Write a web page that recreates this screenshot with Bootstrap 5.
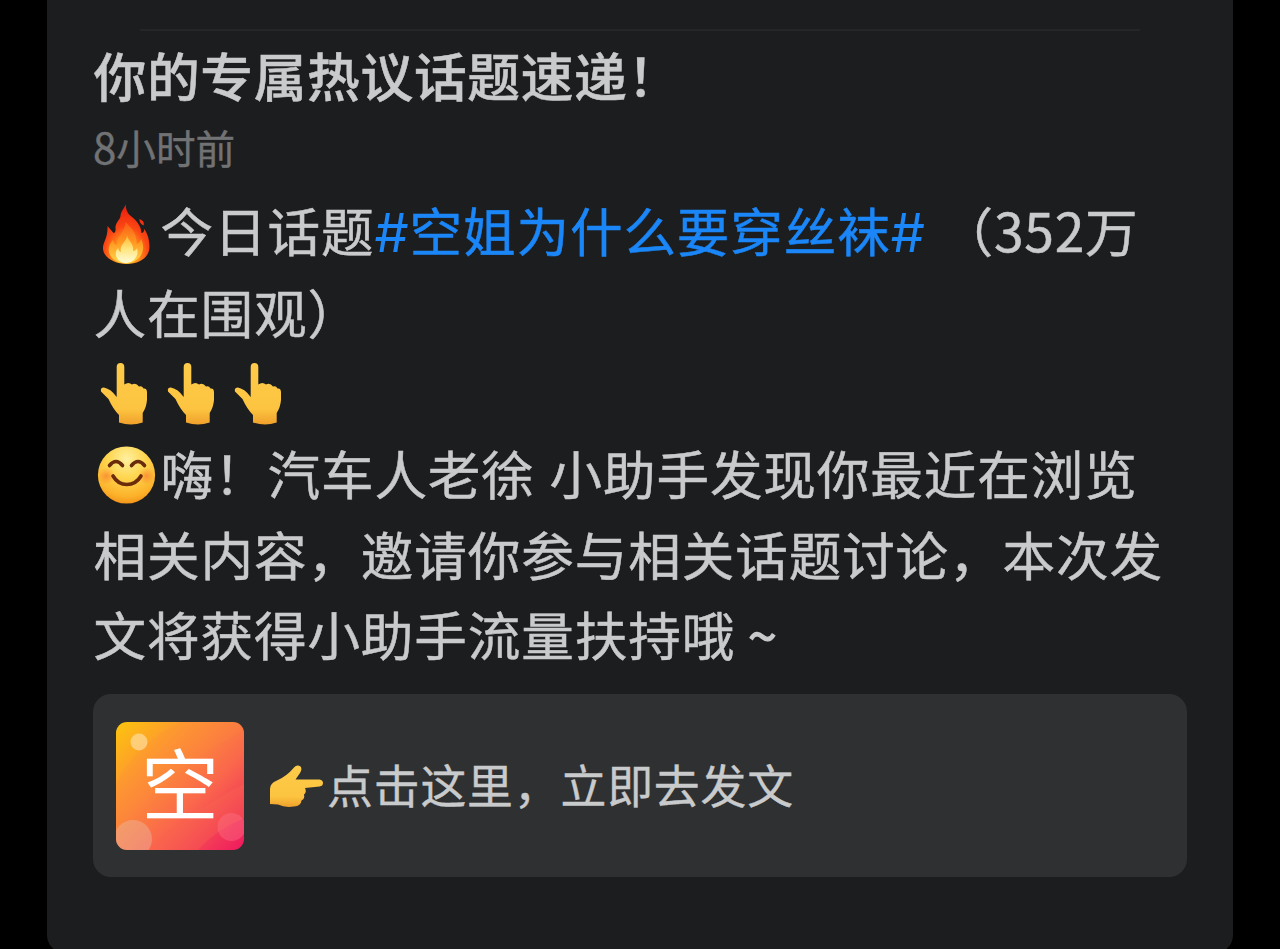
<!DOCTYPE html>
<html lang="zh-CN">
<head>
  <meta charset="UTF-8">
  <title>热议话题速递</title>
  <meta name="viewport" content="width=device-width, initial-scale=1">
  <link href="https://cdn.jsdelivr.net/npm/bootstrap@5.3.2/dist/css/bootstrap.min.css" rel="stylesheet">
  <style>
    body {
      background: #000;
      color: #c9cacc;
      font-family: "Noto Sans CJK SC", sans-serif;
    }
    .tela { height: 949px; }
    .painel {
      height: 953px;
      margin: 0 47px;
      padding: 29px 46px 0;
      background: #1c1d1f;
      border-radius: 0 0 18px 18px;
    }
    .divisor { height: 2px; margin: 0 47px; background: #252628; }
    .titulo {
      font-size: 52.8px;
      letter-spacing: .6px;
      line-height: 80px;
      font-weight: 500;
      margin-top: 3px;
      padding-left: .5px;
      -webkit-text-stroke: .5px currentColor;
    }
    .hora {
      font-size: 39.6px;
      line-height: 60px;
      color: #717274;
      margin-top: 2px;
      -webkit-text-stroke: .4px currentColor;
    }
    .hora span { font-size: 42px; }
    .mensagem {
      font-size: 52.6px;
      letter-spacing: .88px;
      word-spacing: 2px;
      line-height: 80.4px;
      margin-top: 14px;
      -webkit-text-stroke: .5px currentColor;
    }
    .linha { height: 80.4px; padding-left: .5px; }
    .linha-emoji { padding-left: 0; }
    .topico { color: #1a86f7; }
    .hash { font-family: Inter, sans-serif; font-size: 54px; -webkit-text-stroke: 0; }
    .num { font-size: 53.4px; letter-spacing: .7px; }
    .til { margin-left: -2px; -webkit-text-stroke: 1.2px currentColor; }
    .emoji { width: 67.5px; height: 80px; flex: none; margin-top: 3px; }
    .mao-cima { width: 66.8px; }
    .acao {
      height: 183px;
      margin-top: 21px;
      padding-left: 23px;
      background: #2f3031;
      border-radius: 18px;
      font-size: 45.9px;
      letter-spacing: .8px;
    }
    .mao { width: 66px; height: 58px; margin: -2px 0 0 19px; }
    .acao-texto {
      margin: -5px 0 0 -2px;
      -webkit-text-stroke: .4px currentColor;
    }
  </style>
</head>
<body>

  <div class="tela overflow-hidden">
    <div class="painel">
      <div class="divisor"></div>
      <div class="titulo text-nowrap">你的专属热议话题速递！</div>
      <div class="hora text-nowrap"><span>8</span>小时前</div>

      <div class="mensagem text-nowrap">
        <div class="linha linha-emoji d-flex align-items-center">
          <svg class="emoji" viewBox="0 0 67.5 80">
            <defs>
              <radialGradient id="fogo" cx=".5" cy=".85" r=".8">
                <stop offset="0" stop-color="#ffc02c"/>
                <stop offset=".35" stop-color="#ff8a1a"/>
                <stop offset=".6" stop-color="#fb4714"/>
                <stop offset="1" stop-color="#e8200e"/>
              </radialGradient>
              <linearGradient id="chama" x1="0" y1="0" x2="0" y2="1">
                <stop offset="0" stop-color="#fb5a16"/>
                <stop offset=".5" stop-color="#ff9a22"/>
                <stop offset="1" stop-color="#ffd84a"/>
              </linearGradient>
              <linearGradient id="miolo" x1="0" y1="0" x2="0" y2="1">
                <stop offset="0" stop-color="#ffb52c"/>
                <stop offset=".5" stop-color="#ffe680"/>
                <stop offset="1" stop-color="#fffbd8"/>
              </linearGradient>
            </defs>
            <path fill="url(#fogo)" d="M32.700 11.500C33 18 35 21 39 24C44 28 48 33 48.500 40Q51 40 51.300 36C55 41 57 49 56.300 56C55 65 46 71 33.700 71C22 71 11 65 10 56C9.500 49 15 46 14.500 33Q18 37 20.500 40Q23 40 22.500 35C22 30 27 27 27.500 23C28 18 31 16 32.700 11.500ZM46.500 26Q52 28 50.500 32.500Q46 30 46.500 26Z"/>
            <path fill="url(#chama)" d="M32.500 29C37 34 44 39 43.500 51Q47 50 48 46C52 54 50 60 46 65Q40 70.500 33 70.500Q24 70 19 65C14 59 15 52 20 47Q21 52 24 52C24 43 32 39 32.500 29Z"/>
            <path fill="url(#miolo)" d="M34 42C35 48 41 50 40 58Q43 58 44 55Q46 62 41 67Q37 70.500 32 70Q25 69 23 63Q22 58 25 55Q26 59 28 59C26 51 34 49 34 42Z"/>
          </svg>
          <span>今日话题<span class="topico"><span class="hash">#</span>空姐为什么要穿丝袜<span class="hash">#</span></span> （<span class="num">352</span>万</span>
        </div>
        <div class="linha">人在围观）</div>
        <div class="linha linha-emoji d-flex align-items-center" id="maos"></div>
        <div class="linha linha-emoji d-flex align-items-center">
          <svg class="emoji" viewBox="0 0 67.5 80">
            <defs>
              <radialGradient id="rosto" cx=".5" cy=".22" r=".82">
                <stop offset="0" stop-color="#fff0a0"/>
                <stop offset=".4" stop-color="#fed650"/>
                <stop offset=".8" stop-color="#fcb22a"/>
                <stop offset="1" stop-color="#f08b16"/>
              </radialGradient>
              <radialGradient id="bochecha">
                <stop offset="0" stop-color="#f9702a" stop-opacity=".6"/>
                <stop offset="1" stop-color="#f9702a" stop-opacity="0"/>
              </radialGradient>
            </defs>
            <circle cx="33.500" cy="41" r="28.600" fill="url(#rosto)"/>
            <circle cx="13.500" cy="42" r="8.500" fill="url(#bochecha)"/>
            <circle cx="53.500" cy="42" r="8.500" fill="url(#bochecha)"/>
            <g fill="none" stroke="#6b2c0c" stroke-width="3.600" stroke-linecap="round">
              <path d="M16.500 31.500Q23 23.500 29.500 31.500"/>
              <path d="M38.500 31.500Q45 23.500 51.500 31.500"/>
              <path d="M20 42Q25 50.500 33.800 50.500Q43 50.500 48 42"/>
            </g>
          </svg>
          <span>嗨！汽车人老徐 小助手发现你最近在浏览</span>
        </div>
        <div class="linha">相关内容，邀请你参与相关话题讨论，本次发</div>
        <div class="linha">文将获得小助手流量扶持哦 <span class="til">~</span></div>
      </div>

      <div class="acao d-flex align-items-center text-nowrap">
        <svg width="128" height="128" viewBox="0 0 128 128">
          <defs>
            <linearGradient id="fundo" x1="0" y1="0" x2="1" y2="1">
              <stop offset="0" stop-color="#fdc50d"/>
              <stop offset=".3" stop-color="#fd9532"/>
              <stop offset=".62" stop-color="#fa674c"/>
              <stop offset="1" stop-color="#ee185f"/>
            </linearGradient>
            <clipPath id="borda"><rect width="128" height="128" rx="11"/></clipPath>
          </defs>
          <g clip-path="url(#borda)">
            <rect width="128" height="128" fill="url(#fundo)"/>
            <path d="M0 62Q20 22 64 0H128V8Q50 50 0 108Z" fill="#ff8a3c" opacity=".18"/>
            <path d="M38 128Q70 92 128 62V96Q100 108 82 128Z" fill="#fa6a50" opacity=".3"/>
            <circle cx="23" cy="20" r="8.500" fill="#ffe0a8" opacity=".65"/>
            <circle cx="17" cy="117" r="19" fill="#e8c0b0" opacity=".4"/>
            <circle cx="115.500" cy="105" r="14" fill="#ff7c90" opacity=".35"/>
          </g>
          <text x="64" y="92.500" text-anchor="middle" font-size="78" letter-spacing="0" fill="#fff">空</text>
        </svg>
        <svg class="mao" viewBox="0 0 66 58">
          <path fill="url(#pele)" d="M7 33Q7 27 14 24.500Q24 20 31 11.500Q34 8 37.500 10.500Q39.500 13 37 17L32.500 23.500H56.500Q60 24 60 27Q60 30 56.500 30.500L42 32Q44 36 41 38.500Q42 43 38.500 44.500Q38 50 31 50.500Q22 52 15 48.500L7 48Z"/>
        </svg>
        <span class="acao-texto">点击这里，立即去发文</span>
      </div>
    </div>
  </div>

  <script>
    // Três mãos iguais apontando para cima
    const mao = `
      <svg class="emoji mao-cima" viewBox="0 0 66.8 80">
        <defs>
          <linearGradient id="pele" x1="0" y1="0" x2="0" y2="1">
            <stop offset="0" stop-color="#fecb4a"/>
            <stop offset=".75" stop-color="#fcc440"/>
            <stop offset="1" stop-color="#f0a02c"/>
          </linearGradient>
        </defs>
        <path fill="url(#pele)" d="M23.700 14Q23.700 10 27.500 10Q31.300 10 31.300 14V31.500Q35.500 28.500 39 31.500Q43 29.500 46 33.500Q49 32.500 50.500 35.500Q54 35 54 39.500V47Q53.500 54 49.700 60V69.500Q38 73.500 26 69.500V62Q20 56 15.500 46L8 38.500Q7 34.500 11 34.500Q18 36 23.700 44Z"/>
      </svg>`;
    document.getElementById("maos").innerHTML = mao.repeat(3);
  </script>
  <script src="https://cdn.jsdelivr.net/npm/bootstrap@5.3.2/dist/js/bootstrap.bundle.min.js"></script>
</body>
</html>
